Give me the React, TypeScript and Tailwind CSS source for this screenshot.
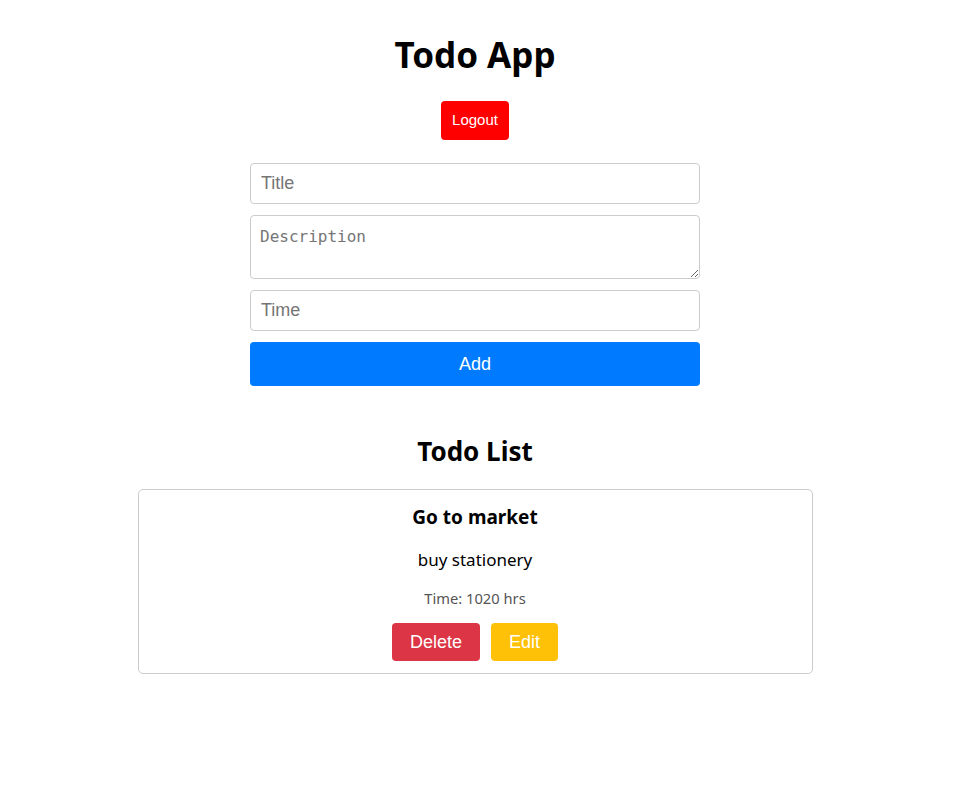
const todos = [
  { id: 1, title: 'Go to market', description: 'buy stationery', time: '1020 hrs' },
]

const sans = "font-['Noto_Sans',sans-serif]"
const arial = "font-['Liberation_Sans',Arial,sans-serif]"

export default function App() {
  return (
    <main className={`min-h-screen bg-white text-black ${sans}`}>
      <div className="flex flex-col items-center pt-[33px] pr-[3px]">
        <h1 className="text-[35px] leading-[44px] font-bold">Todo App</h1>
        <button
          className={`mt-[24px] h-[39px] w-[68px] rounded-[4px] bg-[#ff0000] text-[15px] text-white ${arial}`}
        >
          Logout
        </button>

        <form className="mt-[23px] flex w-[450px] flex-col gap-[11px]" onSubmit={e => e.preventDefault()}>
          <input
            placeholder="Title"
            className={`h-[41px] rounded-[4px] border border-[#ccc] px-[10px] text-[18px] placeholder:text-[#757575] ${arial}`}
          />
          <textarea
            placeholder="Description"
            className="h-[64px] rounded-[4px] border border-[#ccc] px-[9px] pt-[11px] pb-[5px] font-['DejaVu_Sans_Mono',monospace] text-[16px] leading-[20px] placeholder:text-[#757575]"
          />
          <input
            placeholder="Time"
            className={`h-[41px] rounded-[4px] border border-[#ccc] px-[10px] text-[18px] placeholder:text-[#757575] ${arial}`}
          />
          <button className={`h-[44px] rounded-[4px] bg-[#007bff] text-[18px] text-white ${arial}`}>Add</button>
        </form>

        <h2 className="mt-[47px] text-[26px] leading-[36px] font-bold">Todo List</h2>

        <div className="mt-[20px] flex w-[675px] flex-col gap-3">
          {todos.map(todo => (
            <div
              key={todo.id}
              className="flex h-[185px] flex-col items-center rounded-[5px] border border-[#ccc] pt-[14px]"
            >
              <h3 className="text-[19px] leading-[26px] font-bold">{todo.title}</h3>
              <p className="mt-[18px] text-[17px] leading-[24px]">{todo.description}</p>
              <p className="mt-[16px] text-[14.7px] leading-[20px] text-[#555]">Time: {todo.time}</p>
              <div className={`mt-[15px] flex gap-[11px] ${arial}`}>
                <button className="h-[38px] w-[88px] rounded-[4px] bg-[#dc3545] text-[18px] text-white">Delete</button>
                <button className="h-[38px] w-[67px] rounded-[4px] bg-[#ffc107] text-[18px] text-white">Edit</button>
              </div>
            </div>
          ))}
        </div>
      </div>
    </main>
  )
}
